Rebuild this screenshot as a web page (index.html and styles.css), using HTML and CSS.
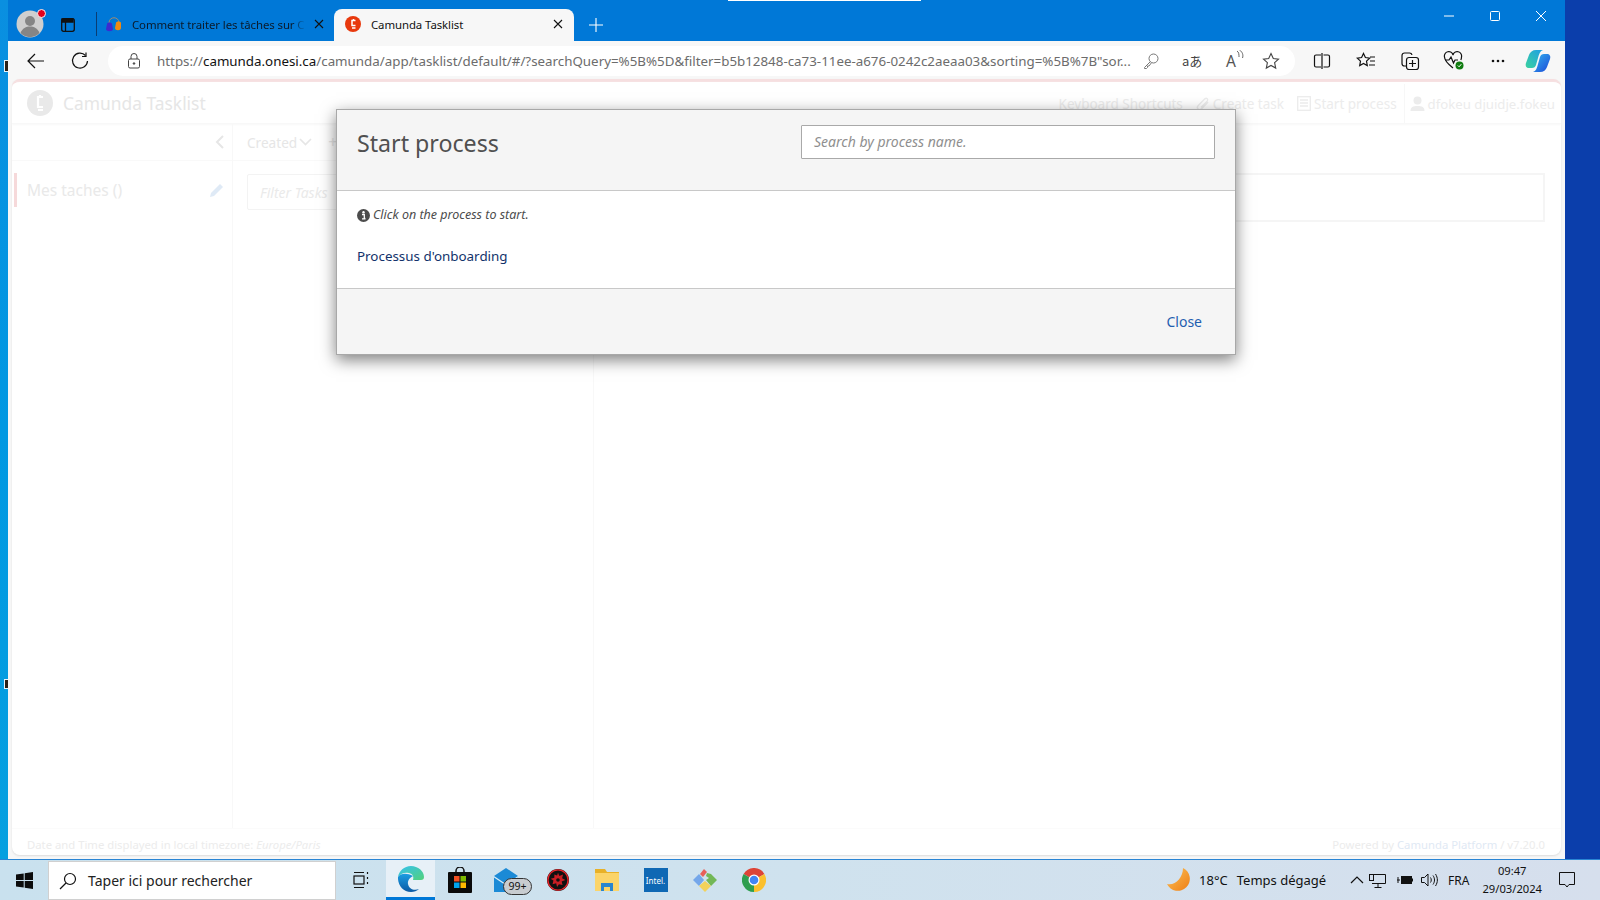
FILE: index.html
```html
<!DOCTYPE html>
<html lang="fr">
<head>
<meta charset="utf-8">
<title>Camunda Tasklist</title>
<link rel="stylesheet" href="styles.css">
</head>
<body>
<div class="desktop">
  <div class="workspace">
    <div class="stripe-left"></div>
    <div class="browser">
      <div class="tabstrip">
        <div class="avatar"><svg width="28" height="28" viewBox="0 0 28 28"><circle cx="14" cy="14" r="13.500" fill="#cfcfcf"/><circle cx="14" cy="11" r="5" fill="#858585"/><path d="M4.500 23c2-5 5.500-6.500 9.500-6.500s7.500 1.500 9.500 6.500a13 13 0 0 1-19 0z" fill="#858585"/></svg><span class="avatar-dot"></span></div>
        <div class="tab-actions"><svg width="16" height="16" viewBox="0 0 16 16" fill="none" stroke="#111" stroke-width="1.300"><rect x="1.700" y="1.700" width="12.600" height="12.600" rx="2"/><path d="M2 2h11v3H2z" fill="#111"/><path d="M5.500 5v9"/></svg></div>
        <div class="tab-sep"></div>
        <div class="tab">
          <svg class="tab-fav" width="18" height="18" viewBox="0 0 18 18"><path d="M4 8c0-7 10-7 10 0" fill="none" stroke="#a08a70" stroke-width="1"/><path d="M2 9c0-2 5-2 5 0l1 5c0 3-7 3-7 0z" fill="#3c2bd0"/><path d="M11 8c0-2 5-2 5 0v5c0 3-6 3-6 0z" fill="#f08a12"/></svg>
          <span class="tab-title fade">Comment traiter les tâches sur C</span>
          <svg class="x" width="10" height="10" viewBox="0 0 10 10"><path d="M1 1l8 8M9 1L1 9" stroke="#111" stroke-width="1.100"/></svg>
        </div>
        <div class="tab active">
          <svg class="tab-fav" width="16" height="16" viewBox="0 0 16 16"><circle cx="8" cy="8" r="8" fill="#e8390d"/><path d="M10.500 4.500H7v5h3.500M7 12h3.500M8.500 3v2" fill="none" stroke="#fff" stroke-width="1.500"/></svg>
          <span class="tab-title">Camunda Tasklist</span>
          <svg class="x" width="10" height="10" viewBox="0 0 10 10"><path d="M1 1l8 8M9 1L1 9" stroke="#111" stroke-width="1.100"/></svg>
        </div>
        <div class="tab-new"><svg width="14" height="14" viewBox="0 0 14 14"><path d="M7 0v14M0 7h14" stroke="#fff" stroke-width="1.100"/></svg></div>
        <div class="winctl">
          <svg width="10" height="10" viewBox="0 0 10 10"><path d="M0 5h10" stroke="#fff"/></svg>
          <svg width="10" height="10" viewBox="0 0 10 10"><rect x=".5" y=".5" width="9" height="9" rx="1" fill="none" stroke="#fff"/></svg>
          <svg width="10" height="10" viewBox="0 0 10 10"><path d="M0 0l10 10M10 0L0 10" stroke="#fff"/></svg>
        </div>
      </div>
      <div class="toolbar">
        <div class="navbtn"><svg width="18" height="16" viewBox="0 0 18 16" fill="none" stroke="#111" stroke-width="1.200"><path d="M17 8H1M8 1L1 8l7 7"/></svg></div>
        <div class="navbtn"><svg width="18" height="18" viewBox="0 0 18 18" fill="none" stroke="#111" stroke-width="1.200"><path d="M14.500 3.500A7.500 7.500 0 1 0 16.500 9"/><path d="M15 .5v4h-4"/></svg></div>
        <div class="urlbar">
          <svg class="lock" width="14" height="16" viewBox="0 0 14 16" fill="none" stroke="#444"><rect x="1.500" y="6" width="11" height="9" rx="1.500"/><path d="M4 6V3.500a3 3 0 0 1 6 0V6"/><circle cx="7" cy="10.500" r=".8" fill="#444"/></svg>
          <span class="url">https://<b>camunda.onesi.ca</b>/camunda/app/tasklist/default/#/?searchQuery=%5B%5D&amp;filter=b5b12848-ca73-11ee-a676-0242c2aeaa03&amp;sorting=%5B%7B"sor...</span>
          <svg class="key" width="16" height="16" viewBox="0 0 16 16" fill="none" stroke="#777"><circle cx="10.500" cy="5.500" r="4.500"/><path d="M7.300 8.700L1.500 14.500v1h2l1-1v-1.500H6l2.300-3"/></svg>
          <span class="urlglyph">aあ</span>
          <span class="urlread">A<svg width="8" height="10" viewBox="0 0 8 10" fill="none" stroke="#555" stroke-width=".9"><path d="M1 1c2 1 2 4 2 6M3.500 0c3 2 4 5 3 8"/></svg></span>
          <svg class="fav" width="18" height="18" viewBox="0 0 18 18" fill="none" stroke="#444" stroke-width="1.100"><path d="M9 1.500l2.300 5 5.200.6-3.900 3.600 1.100 5.400L9 13.400l-4.700 2.700 1.100-5.400L1.500 7.100l5.200-.6z"/></svg>
        </div>
        <div class="tools">
          <svg width="18" height="18" viewBox="0 0 18 18" fill="none" stroke="#111" stroke-width="1.200"><path d="M8 3H3a1.500 1.500 0 0 0-1.500 1.500v9A1.500 1.500 0 0 0 3 15h5M10.500 3H15a1.500 1.500 0 0 1 1.500 1.500v9A1.500 1.500 0 0 1 15 15h-4.500M9 1v16"/></svg>
          <svg width="20" height="18" viewBox="0 0 20 18" fill="none" stroke="#111" stroke-width="1.200"><path d="M7.500 1.500l1.900 4 4.300.6-3.200 3 .8 4.400-3.800-2.100-3.800 2.100.8-4.400-3.200-3 4.300-.6z"/><path d="M14 5h5M14 9h5M13 13h6"/></svg>
          <svg width="20" height="20" viewBox="0 0 20 20" fill="none" stroke="#111" stroke-width="1.200"><path d="M6 15H4.500A2.500 2.500 0 0 1 2 12.500V4.500A2.500 2.500 0 0 1 4.500 2h5A2.500 2.500 0 0 1 12 4"/><rect x="6.500" y="6.500" width="12" height="12" rx="2.500"/><path d="M12.500 9v7M9 12.500h7"/></svg>
          <svg width="22" height="20" viewBox="0 0 22 20"><path d="M10 17C5 13 1.500 10 1.500 6A4 4 0 0 1 10 4a4 4 0 0 1 8.500 2c0 1-.2 2-.7 3" fill="none" stroke="#111" stroke-width="1.200"/><path d="M2 9h4l2-3 2.500 6 1.500-3h3" fill="none" stroke="#111" stroke-width="1.200"/><circle cx="16.500" cy="14.500" r="4" fill="#107c10"/><path d="M14.800 14.500l1.300 1.300 2.200-2.600" fill="none" stroke="#fff"/></svg>
          <svg width="14" height="4" viewBox="0 0 14 4"><circle cx="2" cy="2" r="1.300" fill="#111"/><circle cx="7" cy="2" r="1.300" fill="#111"/><circle cx="12" cy="2" r="1.300" fill="#111"/></svg>
          <svg class="copilot" width="26" height="24" viewBox="0 0 26 24"><defs><linearGradient id="cpa" x1="0" y1="1" x2="1" y2="0"><stop offset="0" stop-color="#3ad29f"/><stop offset="1" stop-color="#1e9ee6"/></linearGradient><linearGradient id="cpb" x1="0" y1="0" x2="1" y2="1"><stop offset="0" stop-color="#33b6ef"/><stop offset="1" stop-color="#1c48d8"/></linearGradient></defs><path d="M11 1h7c-3 1-4 4-5 8l-2 7c-.6 2-2 3-4 3H4c-2.500 0-4-2-3-5L4 6c1-3 3.500-5 7-5z" fill="url(#cpa)"/><path d="M15 23H8c3-1 4-4 5-8l2-7c.6-2 2-3 4-3h3c2.500 0 4 2 3 5l-3 8c-1 3-3.500 5-7 5z" fill="url(#cpb)"/></svg>
        </div>
      </div>
      <div class="pagewrap">
        <div class="card">
          <header class="app-head">
            <svg class="logo" width="26" height="26" viewBox="0 0 26 26"><circle cx="13" cy="13" r="13" fill="#e9e9e9"/><path d="M16 7h-5v10h5M11 20h5M13 5v3" fill="none" stroke="#fff" stroke-width="2.200"/></svg>
            <span class="brand">Camunda Tasklist</span>
            <nav class="app-nav">
              <span class="nav-kbd">Keyboard Shortcuts</span>
              <span class="nav-item"><svg width="15" height="16" viewBox="0 0 16 16" fill="none" stroke="#ececec" stroke-width="1.500"><path d="M14 6l-7 7c-3 2.500-6-.5-3.500-3.500l7-7c2-1.500 4 .5 2.500 2.500l-6.500 6.500"/></svg>Create task</span>
              <span class="nav-item nav-start"><svg width="14" height="15" viewBox="0 0 14 15" fill="none" stroke="#ececec" stroke-width="1.300"><rect x=".7" y=".7" width="12.600" height="13.600"/><path d="M3 4h8M3 7h8M3 10h8"/></svg>Start process</span>
              <span class="nav-user"><svg width="15" height="15" viewBox="0 0 14 15" fill="#ececec"><circle cx="7" cy="4.500" r="4"/><path d="M0 15c0-4 2.500-5 7-5s7 1 7 5z"/></svg>dfokeu djuidje.fokeu</span>
            </nav>
          </header>
          <div class="columns">
            <aside class="col-filters">
              <div class="col-bar filters-bar"><svg width="9" height="14" viewBox="0 0 9 14" fill="none" stroke="#e6e6e6" stroke-width="2"><path d="M8 1L2 7l6 6"/></svg></div>
              <div class="filter-row"><span>Mes taches ()</span><svg width="16" height="16" viewBox="0 0 16 16"><path d="M1 15l1-4 9-9 3 3-9 9z" fill="#dfeaf6"/></svg></div>
            </aside>
            <section class="col-list">
              <div class="col-bar list-bar"><span>Created</span><svg width="13" height="8" viewBox="0 0 13 8" fill="none" stroke="#e6e6e6" stroke-width="1.700"><path d="M1 1l5.500 5.500L12 1"/></svg><span class="plus">+</span></div>
              <div class="filter-input">Filter Tasks</div>
            </section>
            <section class="col-detail">
              <div class="detail-box"></div>
            </section>
          </div>
          <footer class="app-foot">
            <span>Date and Time displayed in local timezone: <i>Europe/Paris</i></span>
            <span>Powered by <span class="foot-link">Camunda Platform</span> / v7.20.0</span>
          </footer>
        </div>
        <div class="modal">
          <div class="modal-head">
            <h3>Start process</h3>
            <div class="search">Search by process name.</div>
          </div>
          <div class="modal-body">
            <p class="hint"><svg width="13" height="13" viewBox="0 0 13 13"><circle cx="6.500" cy="6.500" r="6.500" fill="#4c4c4c"/><path d="M5 5.500h2.300V9.500H8.300M5 9.800h3.500" stroke="#fff" stroke-width="1.300" fill="none"/><circle cx="6.500" cy="3.200" r="1.200" fill="#fff"/></svg><i>Click on the process to start.</i></p>
            <a class="proc">Processus d'onboarding</a>
          </div>
          <div class="modal-foot"><a class="close">Close</a></div>
        </div>
      </div>
    </div>
    <div class="stripe-right"></div>
  </div>
  <div class="taskbar">
    <div class="start"><svg width="17" height="17" viewBox="0 0 17 17" fill="#0c0c0c"><path d="M0 2.500L7.700 1.400v6.700H0zM8.700 1.300L17 0v8.100H8.700zM0 9h7.700v6.600L0 14.500zM8.700 9H17v8l-8.300-1.200z"/></svg></div>
    <div class="tsearch"><svg width="18" height="18" viewBox="0 0 18 18" fill="none" stroke="#111" stroke-width="1.200"><circle cx="11" cy="7" r="5.500"/><path d="M7 11l-6 6"/></svg><span>Taper ici pour rechercher</span></div>
    <div class="taskview"><svg width="16" height="18" viewBox="0 0 16 18" fill="none" stroke="#111" stroke-width="1.200"><rect x="1" y="5" width="10" height="8"/><path d="M1 1.500h10M1 16.500h10M14.500 1v2M14.500 6v2M14.500 11v2"/></svg></div>
    <div class="apps">
      <div class="app app-active"><svg width="26" height="26" viewBox="0 0 26 26"><defs><linearGradient id="ed1" x1="0" y1="0" x2="1" y2="1"><stop offset="0" stop-color="#35c1f1"/><stop offset="1" stop-color="#52d17a"/></linearGradient><linearGradient id="ed2" x1="0" y1="0" x2="0" y2="1"><stop offset="0" stop-color="#1b9de2"/><stop offset="1" stop-color="#0c59a4"/></linearGradient></defs><path d="M13 0C6 0 1 5 0 11c3-4 7-5 11-4 4 1 5 4 4 7h8c2 0 3-1 3-3C26 5 20 0 13 0z" fill="url(#ed1)"/><path d="M0 11c-.5 8 5 15 13 15 3 0 6-1 8-3-5 2-10 0-11-5-.6-3 1-6 5-8C9 7 3 7 0 11z" fill="url(#ed2)"/></svg></div>
      <div class="app"><svg width="24" height="26" viewBox="0 0 24 26"><path d="M8 7V4a4 4 0 0 1 8 0v3" fill="none" stroke="#111" stroke-width="1.500"/><rect y="5" width="24" height="21" rx="1" fill="#0a0a0a"/><rect x="6" y="9" width="5.500" height="5.500" fill="#f25022"/><rect x="12.500" y="9" width="5.500" height="5.500" fill="#7fba00"/><rect x="6" y="15.500" width="5.500" height="5.500" fill="#00a4ef"/><rect x="12.500" y="15.500" width="5.500" height="5.500" fill="#ffb900"/></svg></div>
      <div class="app"><svg class="mail" width="24" height="24" viewBox="0 0 24 24"><path d="M0 8L12 0l12 8v16H0z" fill="#1b8ad6"/><path d="M0 8l12 8 12-8v1.500L12 17.500 0 9.500z" fill="#d7eefa"/></svg><span class="badge">99+</span></div>
      <div class="app"><svg width="22" height="22" viewBox="0 0 24 24"><circle cx="12" cy="12" r="12" fill="#111"/><circle cx="12" cy="12" r="11" fill="none" stroke="#e8242a" stroke-width="1.500"/><path d="M12 4l1.500 3.500 4-1.500-1 4 3.500 2-4 1.500 1 4-4-1-2 3-1-4-4 1 1-4-3-2 4-1V6l3 1z" fill="#c81e24"/><circle cx="12" cy="12" r="2" fill="#111"/></svg></div>
      <div class="app"><svg width="24" height="22" viewBox="0 0 24 22"><path d="M0 0h10l2 3h12v6H0z" fill="#e8b128"/><rect y="4" width="24" height="18" fill="#fbd469"/><path d="M6 22v-8h12v8h-3v-4H9v4z" fill="#2a85cf"/></svg></div>
      <div class="app"><span class="intel">Intel.</span></div>
      <div class="app"><svg width="24" height="24" viewBox="0 0 24 24"><path d="M7 6l4-5 3 3-4 5z" fill="#e7605a"/><path d="M0 12l6-6 5 6-5 6z" fill="#75a7ea"/><path d="M14 5l4 1 6 6-6 6-5-6 3-2-3-2z" fill="#72b857"/><path d="M6 18l6-5 6 5-6 6z" fill="#f2d25a"/></svg></div>
      <div class="app"><svg width="24" height="24" viewBox="0 0 24 24"><path d="M12 12L1.600 6A12 12 0 0 1 22.400 6z" fill="#dd4437"/><path d="M12 12L22.400 6A12 12 0 0 1 12 24z" fill="#fbc02d"/><path d="M12 12L12 24A12 12 0 0 1 1.600 6z" fill="#2e9e4f"/><circle cx="12" cy="12" r="5.500" fill="#fff"/><circle cx="12" cy="12" r="4.300" fill="#4285f4"/></svg></div>
    </div>
    <div class="tray">
      <svg class="moon" width="24" height="24" viewBox="0 0 24 24"><defs><linearGradient id="mn" x1="0" y1="0" x2="1" y2="1"><stop offset="0" stop-color="#fbc35a"/><stop offset="1" stop-color="#ef7e14"/></linearGradient></defs><path d="M16 0a12 12 0 1 1-16 16C8 18 16 10 16 0z" fill="url(#mn)"/></svg>
      <span class="temp">18°C</span>
      <span class="weather">Temps dégagé</span>
      <svg class="chev" width="14" height="8" viewBox="0 0 14 8" fill="none" stroke="#111" stroke-width="1.200"><path d="M1 7l6-6 6 6"/></svg>
      <svg class="ti-net" width="17" height="15" viewBox="0 0 17 15" fill="none" stroke="#111"><path d="M4 1.500h12.500v9H3"/><path d="M9 10.500v4M5.500 14.500h7"/><rect x=".5" y="1.500" width="4" height="6" fill="#d3deec"/></svg>
      <svg class="ti-bat" width="16" height="12" viewBox="0 0 16 12"><rect x="4" y="2" width="11" height="8" fill="#111"/><rect x="15" y="4.500" width="1" height="3" fill="#111"/><path d="M0 6h3M1 3v6" stroke="#111"/></svg>
      <svg class="ti-vol" width="17" height="14" viewBox="0 0 17 14" fill="none" stroke="#111"><path d="M.5 4.500h3l3.500-3.500v12L3.500 9.500h-3z"/><path d="M9.500 4.500c1 1.500 1 3.500 0 5M12 2.500c2 3 2 6 0 9M14.500 1c2.500 4 2.500 8 0 12"/></svg>
      <span class="lang">FRA</span>
      <div class="clock"><span>09:47</span><span>29/03/2024</span></div>
      <svg class="notif" width="16" height="16" viewBox="0 0 16 16" fill="none" stroke="#111"><path d="M.5.500h15v12H10L8 15l-2-2.500H.5z"/></svg>
    </div>
  </div>
  <div class="topflash"></div>
  <div class="edge-mark edge-mark-a"></div>
  <div class="edge-mark edge-mark-b"></div>
</div>
</body>
</html>
```
FILE: styles.css
```css
* { box-sizing: border-box; }
html, body { margin: 0; height: 100%; overflow: hidden; }
body { font-family: "Noto Sans", "Liberation Sans", sans-serif; color: #111; }
svg { flex: none; display: block; }

.desktop { height: 900px; width: 1600px; display: flex; flex-direction: column; position: relative; }
.topflash { position: absolute; left: 728px; top: 0; width: 193px; height: 1px; background: #fff; }
.edge-mark { position: absolute; left: 4px; width: 4px; height: 10px; background: #2a2018; border: 1px solid #e8f4fb; border-right: 0; }
.edge-mark-a { top: 60px; height: 12px; }
.edge-mark-b { top: 679px; }
.workspace { flex: 1; display: flex; min-height: 0; }
.stripe-left { width: 8px; background: linear-gradient(180deg, #0a8fe0, #0098e2 50%, #06a0e0); }
.stripe-right { width: 35px; background: #0b3eab; }
.browser { flex: 1; display: flex; flex-direction: column; min-width: 0; background: #f7f7f7; }

.tabstrip { height: 41px; background: #0078d7; display: flex; align-items: flex-end; position: relative; flex: none; }
.avatar { width: 28px; height: 28px; margin: 0 0 3px 8px; position: relative; }
.avatar-dot { position: absolute; right: -2px; top: -1px; width: 9px; height: 9px; border-radius: 50%; background: #e3001b; border: 1px solid #f4f4f4; }
.tab-actions { margin: 0 0 8px 16px; }
.tab-sep { width: 1px; height: 24px; background: #0a3d73; margin: 0 0 5px 20px; }
.tab { height: 32px; display: flex; align-items: center; padding: 0 10px 2px 8px; font-size: 11.400px; letter-spacing: -.08px; color: #0a1a2a; }
.tab:not(.active) { width: 237px; }
.tab.active { width: 240px; background: #f7f7f7; border-radius: 8px 8px 0 0; padding: 0 11px 2px; color: #111; }
.tab-fav { margin-right: 9px; }
.tab-title { flex: 1; white-space: nowrap; overflow: hidden; }
.tab.active .tab-title { padding-left: 1px; }
.fade { -webkit-mask-image: linear-gradient(90deg, #000 92%, transparent); mask-image: linear-gradient(90deg, #000 92%, transparent); }
.x { margin-left: 8px; }
.tab-new { margin: 0 0 9px 15px; }
.winctl { margin-left: auto; display: flex; gap: 36px; padding: 0 19px 20px 0; }

.toolbar { height: 39px; display: flex; align-items: center; background: #f7f7f7; flex: none; }
.navbtn { width: 44px; display: flex; justify-content: center; }
.navbtn:first-child { margin-left: 6px; }
.urlbar { width: 1187px; height: 30px; flex: none; margin-left: 6px; border-radius: 15px; background: #fff; display: flex; align-items: center; padding: 0 15px 0 19px; }
.lock { margin-right: 16px; }
.url { font-size: 13.350px; color: #6c6c6c; white-space: nowrap; width: 975px; flex: none; }
.url b { font-weight: 400; color: #111; }
.key { margin-left: 11px; }
.urlglyph { font: 13px "Noto Sans CJK JP", "Noto Sans", sans-serif; color: #444; margin-left: 23px; width: 17px; white-space: nowrap; }
.urlread { font-size: 15.500px; color: #555; margin-left: 27px; display: flex; width: 20px; }
.fav { margin-left: 16px; }
.tools { flex: 1; display: grid; grid-template-columns: repeat(6, 44px); justify-items: center; align-items: center; padding-left: 5px; }
.copilot { margin-left: -8px; }

.pagewrap { flex: 1; position: relative; padding: 0 4px 3px 4px; background: #f7f7f7; min-height: 0; }
.card { height: 100%; background: #fff; border-top: 3px solid #f6dfe0; border-radius: 8px; margin-top: -1px; display: flex; flex-direction: column; box-shadow: 0 1px 2px #dcdcdc; color: #ececec; }
.app-head { height: 42px; flex: none; display: flex; align-items: center; padding-left: 15px; border-bottom: 1px solid #f8f8f8; box-shadow: 0 1px 2px #f8f8f8; }
.logo { margin-right: 10px; }
.brand { font-size: 17.400px; color: #e6e6e6; }
.app-nav { margin-left: auto; display: flex; align-items: center; height: 100%; font-size: 13.500px; color: #ececec; padding: 2px 6px 0 0; }
.nav-kbd { margin-right: 12px; }
.nav-item { display: flex; align-items: center; gap: 3px; margin-right: 13px; }
.nav-start { margin-right: 7px; }
.nav-user { display: flex; align-items: center; gap: 3px; height: 100%; border-left: 1px solid #f7f7f7; padding-left: 5px; font-size: 13.200px; }

.columns { flex: 1; display: flex; min-height: 0; }
.col-filters { width: 221px; border-right: 1px solid #f8f8f8; }
.col-list { width: 361px; border-right: 1px solid #f8f8f8; }
.col-detail { flex: 1; padding: 49px 16px 0 13px; }
.col-bar { height: 37px; display: flex; align-items: center; border-bottom: 1px solid #f9f9f9; }
.filters-bar { justify-content: flex-end; padding-right: 8px; }
.list-bar { padding-left: 14px; gap: 2px; font-size: 13.600px; color: #e6e6e6; }
.plus { margin-left: 14px; font-size: 16px; }
.filter-row { margin: 12px 5px 0 2px; height: 34px; border-left: 3px solid #f6d9da; display: flex; align-items: center; justify-content: space-between; padding: 0 2px 0 10px; font-size: 15.500px; color: #e9e9e9; }
.filter-input { margin: 13px 0 0 14px; height: 36px; width: 200px; border: 1px solid #f3f3f3; border-radius: 2px; font-size: 14px; font-style: italic; color: #eaeaea; padding: 8px 12px; }
.detail-box { height: 49px; border: 2px solid #f5f5f5; }
.app-foot { height: 27px; flex: none; display: flex; justify-content: space-between; align-items: center; padding: 5px 16px 0 15px; font-size: 11.300px; color: #ececec; border-top: 1px solid #fbfbfb; }
.foot-link { color: #dfe9f4; }

.modal { position: absolute; left: 328px; top: 29px; width: 900px; height: 246px; background: #fff; border: 1px solid #a8a8a8; display: flex; flex-direction: column; box-shadow: 0 5px 15px rgba(0,0,0,.5); color: #4c4c4c; }
.modal-head { height: 81px; flex: none; background: #f5f5f5; border-bottom: 1px solid #c8c8c8; display: flex; justify-content: space-between; padding: 15px 20px 0; }
.modal-head h3 { margin: 1px 0 0; font-weight: 400; font-size: 23.200px; line-height: 34px; color: #505050; }
.search { width: 414px; height: 34px; background: #fff; border: 1px solid #a9a9a9; border-radius: 1px; font-size: 14px; font-style: italic; color: #8f8f8f; padding: 6px 12px; line-height: 20px; }
.modal-body { flex: 1; padding: 15px 20px; }
.hint { margin: 0 0 22px; display: flex; align-items: center; gap: 3px; font-size: 12.500px; line-height: 18px; }
.proc { font-size: 13.400px; color: #12326b; display: block; line-height: 20px; }
.modal-foot { height: 66px; flex: none; background: #f5f5f5; border-top: 1px solid #c8c8c8; display: flex; justify-content: flex-end; align-items: center; padding: 0 33px; }
.close { font-size: 14px; color: #1f5fb0; }

.taskbar { height: 41px; flex: none; display: flex; align-items: stretch; background: linear-gradient(90deg, #c9e1ee, #cfe2ee 50%, #d6dfed); border-top: 1px solid #2a85d4; }
.start { width: 48px; display: flex; align-items: center; justify-content: center; }
.tsearch { width: 288px; margin-top: 1px; background: #fff; border: 1px solid #d0d0d0; display: flex; align-items: center; gap: 11px; padding-left: 10px; font-size: 14px; color: #222; }
.taskview { width: 50px; display: flex; align-items: center; justify-content: center; }
.apps { display: flex; }
.app { width: 49px; display: flex; align-items: center; justify-content: center; position: relative; }
.app-active { background: #e7f0f7; border-bottom: 3px solid #0078d7; }
.mail { margin-right: 6px; }
.badge { position: absolute; left: 19px; top: 18px; width: 29px; height: 17px; border-radius: 9px; background: #c8ccd0; border: 1px solid #333; font-size: 10.500px; line-height: 15px; text-align: center; color: #111; }
.intel { width: 24px; height: 24px; background: #0f68b4; color: #fff; font-size: 8px; display: flex; align-items: center; justify-content: center; }
.tray { margin-left: auto; display: flex; align-items: center; font-size: 13px; color: #111; }
.moon { margin-right: 8px; }
.temp { margin-right: 9px; }
.weather { margin-right: 24px; }
.chev { margin-right: 4.500px; }
.ti-net { margin-right: 11.500px; }
.ti-bat { margin-right: 7.500px; }
.ti-vol { margin-right: 10.500px; }
.lang { font-size: 12px; margin-right: 13px; }
.clock { display: flex; flex-direction: column; align-items: center; font-size: 11.200px; line-height: 18px; margin-right: 17px; }
.notif { margin-right: 25px; }
```
